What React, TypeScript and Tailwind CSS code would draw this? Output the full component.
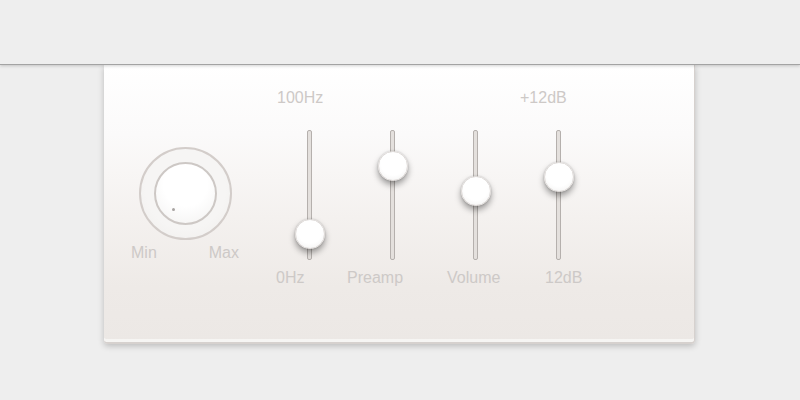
import React from "react";

const font = { fontFamily: '"Liberation Sans", Arial, sans-serif' };

function Slider({ pos }: { pos: number }) {
  return (
    <div className="flex w-[83px] justify-center">
      <div className="relative h-[130px] w-[5px] rounded-[2px] border border-[#b5b0ad] bg-[#e4e0dd]">
        <div
          className="absolute left-1/2 h-[30px] w-[30px] -translate-x-1/2 rounded-full border border-[#dedad8] bg-[radial-gradient(circle_at_50%_40%,#ffffff_55%,#f0efee_100%)] shadow-[0_4px_6px_rgba(0,0,0,0.38),0_0_2px_rgba(0,0,0,0.2)]"
          style={{ top: pos - 16 }}
        />
      </div>
    </div>
  );
}

export default function App() {
  return (
    <div className="h-[400px] w-[800px] overflow-hidden bg-[#eeeeee]" style={font}>
      <div className="relative z-10 h-[65px] border-b border-[#a3a3a3] bg-[#eeeeee] shadow-[0_1px_3px_rgba(0,0,0,0.18)]" />
      <div className="ml-[104px] flex h-[279px] w-[591px] rounded-b-[4px] border-b-2 border-r border-[#d6d1ce] bg-[linear-gradient(to_bottom,#ffffff_0%,#fbfafa_25%,#f4f1ef_55%,#eeeae7_80%,#ece8e5_100%)] pl-[27px] text-[16px] leading-[18px] text-[#cdc9c7] shadow-[0_2px_6px_rgba(0,0,0,0.22),inset_0_-3px_0_rgba(255,255,255,0.55)]">
        {/* Knob */}
        <div className="flex w-[108px] flex-col pt-[82px]">
          <div className="mx-auto flex h-[93px] w-[93px] items-center justify-center rounded-full border-2 border-[#d3cdca] bg-[radial-gradient(circle_at_50%_45%,#f6f5f4_60%,#efedeb_100%)]">
            <div className="relative h-[63px] w-[63px] rounded-full border-2 border-[#cdc8c5] bg-[radial-gradient(circle_at_50%_35%,#ffffff_45%,#f2f1f0_100%)]">
              <div className="absolute left-[16px] top-[44px] h-[3px] w-[3px] rounded-full bg-[#a8a4a2]" />
            </div>
          </div>
          <div className="mt-[4px] flex justify-between">
            <span>Min</span>
            <span>Max</span>
          </div>
        </div>
        {/* Sliders */}
        <div className="ml-[29px] flex flex-col pt-[24px]">
          <div className="flex">
            <span className="ml-[9px] w-[243px]">100Hz</span>
            <span>+12dB</span>
          </div>
          <div className="mt-[23px] flex">
            <Slider pos={104} />
            <Slider pos={36} />
            <Slider pos={61} />
            <Slider pos={47} />
          </div>
          <div className="mt-[9px] flex">
            <span className="ml-[8px] w-[71px]">0Hz</span>
            <span className="w-[100px]">Preamp</span>
            <span className="w-[98px]">Volume</span>
            <span>12dB</span>
          </div>
        </div>
      </div>
    </div>
  );
}
